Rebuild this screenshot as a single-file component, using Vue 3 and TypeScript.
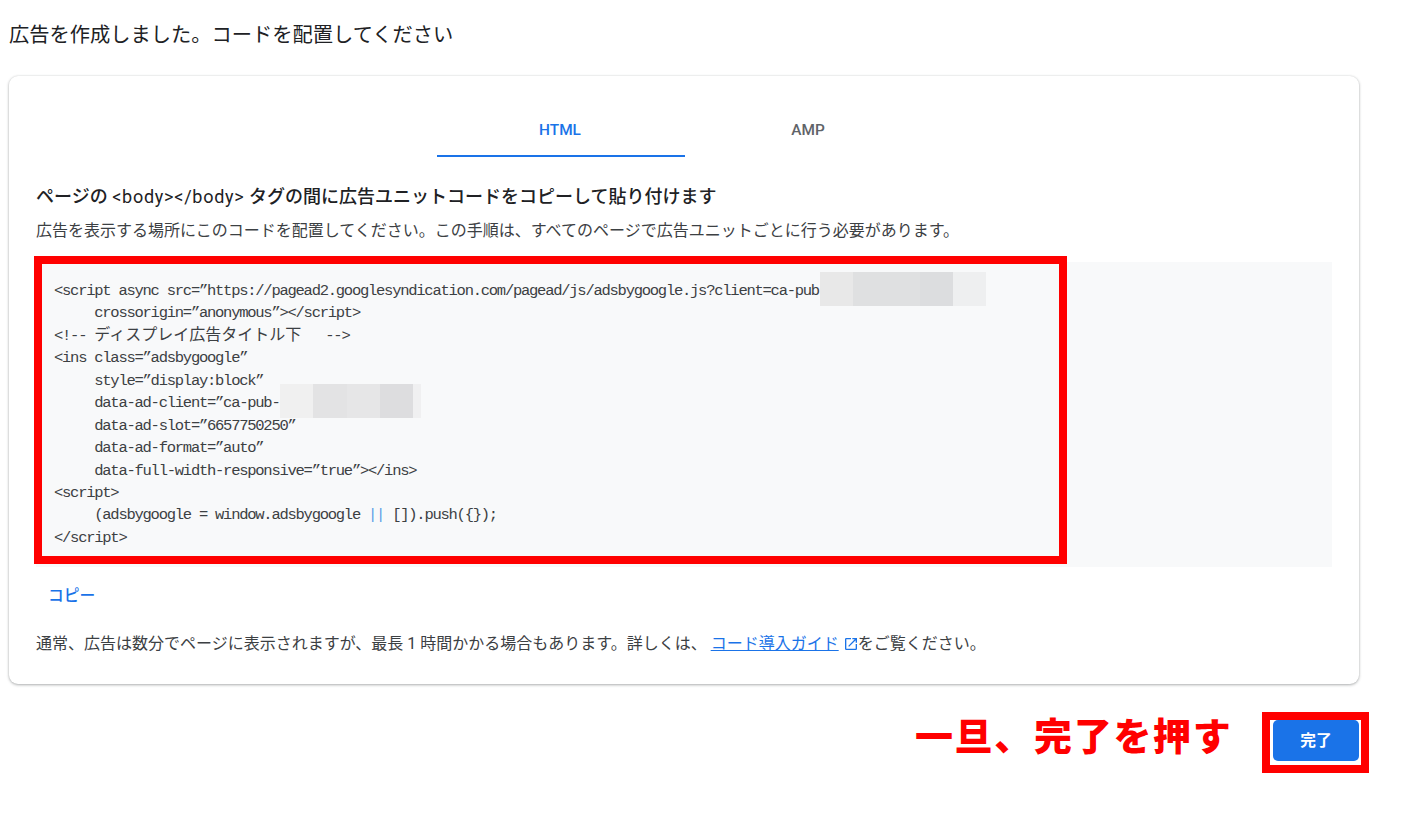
<script setup lang="ts">
interface Seg { t: string; c?: string }
const lines: Seg[][] = [
  [{ t: '<script async src=”https://pagead2.googlesyndication.com/pagead/js/adsbygoogle.js?client=ca-pub' }],
  [{ t: '     crossorigin=”anonymous”></' + 'script>' }],
  [{ t: '<!-- ' }, { t: 'ディスプレイ広告タイトル下', c: 'jp' }, { t: '   -->' }],
  [{ t: '<ins class=”adsbygoogle”' }],
  [{ t: '     style=”display:block”' }],
  [{ t: '     data-ad-client=”ca-pub-' }],
  [{ t: '     data-ad-slot=”6657750250”' }],
  [{ t: '     data-ad-format=”auto”' }],
  [{ t: '     data-full-width-responsive=”true”></ins>' }],
  [{ t: '<script>' }],
  [{ t: '     (adsbygoogle = window.adsbygoogle ' }, { t: '||', c: 'op' }, { t: ' []).push({});' }],
  [{ t: '</' + 'script>' }]
]
const blurOne = [
  { w: 33, c: '#e8e8e8' },
  { w: 67, c: '#dfe0e1' },
  { w: 33, c: '#dcdddf' },
  { w: 33, c: '#eeeff0' }
]
const blurTwo = [
  { w: 33, c: '#f0f0f0' },
  { w: 34, c: '#e3e3e4' },
  { w: 33, c: '#e6e6e7' },
  { w: 33, c: '#dddddf' },
  { w: 8, c: '#f0f0f1' }
]
</script>

<template>
  <main class="page">
    <h1 class="title">広告を作成しました。コードを配置してください</h1>
    <section class="card">
      <nav class="tabs">
        <div class="tab active">HTML</div>
        <div class="tab">AMP</div>
      </nav>
      <h2 class="heading">ページの <span class="tag">&lt;body&gt;&lt;/body&gt;</span> タグの間に広告ユニットコードをコピーして貼り付けます</h2>
      <p class="desc">広告を表示する場所にこのコードを配置してください。この手順は、すべてのページで広告ユニットごとに行う必要があります。</p>
      <div class="code">
        <div v-for="(line, i) in lines" :key="i" class="line">
          <span v-for="(seg, j) in line" :key="j" :class="seg.c">{{ seg.t }}</span>
        </div>
        <div class="blur blur-one">
          <i v-for="(b, k) in blurOne" :key="k" :style="{ width: b.w + 'px', background: b.c }"></i>
        </div>
        <div class="blur blur-two">
          <i v-for="(b, k) in blurTwo" :key="k" :style="{ width: b.w + 'px', background: b.c }"></i>
        </div>
        <div class="code-frame"></div>
      </div>
      <div class="copy">コピー</div>
      <p class="note">
        通常、広告は数分でページに表示されますが、最長 1 時間かかる場合もあります。詳しくは、 <a class="link">コード導入ガイド</a>
        <svg class="ext" viewBox="3 3 18 18" width="12" height="12" aria-hidden="true">
          <path fill="#1a73e8" d="M19 19H5V5h7V3H5a2 2 0 0 0-2 2v14a2 2 0 0 0 2 2h14a2 2 0 0 0 2-2v-7h-2v7zM14 3v2h3.59l-9.83 9.83 1.41 1.41L19 6.41V10h2V3h-7z" />
        </svg>をご覧ください。
      </p>
    </section>
    <footer class="actions">
      <span class="hand">一旦、完了を押す</span>
      <div class="btn-wrap">
        <button class="done" type="button">完了</button>
      </div>
    </footer>
  </main>
</template>

<style>
html, body { margin: 0; background: #fff; }
</style>

<style scoped>
.page {
  width: 1350px;
  padding: 21px 0 0 9px;
  font-family: Roboto, "Noto Sans CJK JP", sans-serif;
  color: #202124;
}
.title {
  margin: 0 0 27px;
  font-size: 20.25px;
  line-height: 28px;
  font-weight: 400;
}
.card {
  box-sizing: border-box;
  height: 608px;
  padding: 26px 27px 0;
  border-radius: 9px;
  background: #fff;
  box-shadow: 0 1px 3px rgba(60, 64, 67, 0.4), 0 0 2px rgba(60, 64, 67, 0.12);
}
.tabs {
  display: flex;
  justify-content: center;
  padding-left: 2px;
}
.tab {
  width: 248px;
  height: 55px;
  box-sizing: border-box;
  padding-right: 2px;
  text-align: center;
  line-height: 56px;
  font-size: 15.4px;
  font-weight: 500;
  color: #5f6368;
}
.tab.active {
  color: #1a73e8;
  border-bottom: 2px solid #1a73e8;
}
.heading {
  margin: 28px 0 0;
  font-size: 18px;
  line-height: 24px;
  font-weight: 500;
}
.tag {
  font-weight: 400;
  letter-spacing: 0.75px;
}
.desc {
  margin: 10px 0 0;
  font-size: 16px;
  line-height: 24px;
  color: #3c4043;
}
.code {
  position: relative;
  height: 305px;
  margin-top: 19px;
  padding: 18px 18px 0;
  box-sizing: border-box;
  background: #f8f9fa;
  font-family: "Liberation Mono", "Noto Sans CJK JP", monospace;
  font-size: 15.5px;
  letter-spacing: -1.25px;
  color: #3c4043;
}
.line {
  height: 22.45px;
  line-height: 22.45px;
  white-space: pre;
}
.jp {
  font-family: "Noto Sans CJK JP", sans-serif;
  font-size: 16px;
  line-height: 0;
  letter-spacing: 0;
}
.op { color: #5aa0e8; }
.blur {
  position: absolute;
  display: flex;
  height: 34px;
}
.blur i { display: block; height: 100%; }
.blur-one { left: 784px; top: 10px; }
.blur-two { left: 244px; top: 122px; }
.code-frame {
  position: absolute;
  left: -2.5px;
  top: -6px;
  width: 1033.5px;
  height: 308px;
  box-sizing: border-box;
  border: 8.5px solid #f00;
  pointer-events: none;
}
.copy {
  margin: 17px 0 0 12px;
  font-size: 15.75px;
  line-height: 24px;
  font-weight: 500;
  color: #1a73e8;
}
.note {
  margin: 24px 0 0;
  font-size: 16px;
  line-height: 24px;
  color: #3c4043;
}
.link {
  color: #1a73e8;
  text-decoration: underline;
}
.ext {
  vertical-align: -1px;
  margin: 0 1px 0 6px;
}
.actions {
  display: flex;
  justify-content: flex-end;
  align-items: center;
  margin: 28px -10px 0 0;
}
.hand {
  margin: 0 29px 19px 0;
  font-family: "Noto Sans CJK JP", sans-serif;
  font-size: 38px;
  line-height: 41px;
  font-weight: 900;
  letter-spacing: 1.7px;
  color: #f00;
}
.btn-wrap {
  display: flex;
  padding: 0 2px 4px 3.5px;
  border: 8.5px solid #f00;
}
.done {
  width: 86px;
  height: 41px;
  padding: 0 0 2px;
  border: 0;
  border-radius: 5px;
  background: #1a73e8;
  color: #fff;
  font-family: "Noto Sans CJK JP", sans-serif;
  font-size: 15.75px;
  font-weight: 700;
}
</style>
